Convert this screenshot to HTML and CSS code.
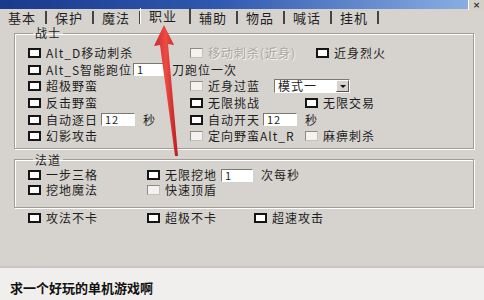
FILE: index.html
```html
<!DOCTYPE html>
<html lang="zh">
<head>
    <meta charset="UTF-8">
    <title>职业设置</title>
    <link rel="stylesheet" href="styles.css">
</head>
<body>
    <div class="window">
        <div class="titlebar"><span class="close">×</span></div>

        <div class="tabs">
            <span class="tab">基本</span>
            <span class="tab">保护</span>
            <span class="tab">魔法</span>
            <span class="tab active">职业</span>
            <span class="tab">辅助</span>
            <span class="tab">物品</span>
            <span class="tab">喊话</span>
            <span class="tab">挂机</span>
        </div>

        <fieldset class="group warrior">
            <legend>战士</legend>
            <div class="row">
                <span class="col1"><span class="cb"></span>Alt_D移动刺杀</span>
                <span class="col2 wide"><span class="cb off"></span><span class="off-text">移动刺杀(近身)</span></span>
                <span class="cb"></span>近身烈火
            </div>
            <div class="row">
                <span class="col1"><span class="cb"></span>Alt_S智能跑位<span class="field short">1</span><span class="after">刀跑位一次</span></span>
            </div>
            <div class="row">
                <span class="col1"><span class="cb"></span>超极野蛮</span>
                <span class="cb off"></span>近身过蓝
                <span class="select">模式一<span class="drop"></span></span>
            </div>
            <div class="row">
                <span class="col1"><span class="cb"></span>反击野蛮</span>
                <span class="col2"><span class="cb"></span>无限挑战</span>
                <span class="cb"></span>无限交易
            </div>
            <div class="row">
                <span class="col1"><span class="cb"></span>自动逐日<span class="field">12</span><span class="after">秒</span></span>
                <span class="cb"></span>自动开天<span class="field">12</span><span class="after">秒</span>
            </div>
            <div class="row">
                <span class="col1"><span class="cb"></span>幻影攻击</span>
                <span class="col2"><span class="cb off"></span>定向野蛮Alt_R</span>
                <span class="cb off"></span>麻痹刺杀
            </div>
        </fieldset>

        <fieldset class="group mage">
            <legend>法道</legend>
            <div class="row">
                <span class="col1 narrow"><span class="cb"></span>一步三格</span>
                <span class="cb"></span>无限挖地<span class="field wide-field">1</span><span class="after">次每秒</span>
            </div>
            <div class="row">
                <span class="col1 narrow"><span class="cb"></span>挖地魔法</span>
                <span class="cb off"></span>快速顶盾
            </div>
        </fieldset>

        <div class="row extra">
            <span class="col1 narrow"><span class="cb"></span>攻法不卡</span>
            <span class="col2 mid"><span class="cb"></span>超极不卡</span>
            <span class="cb"></span>超速攻击
        </div>
    </div>

    <div class="caption">求一个好玩的单机游戏啊</div>

    <!-- red marker arrow drawn over the screenshot -->
    <svg class="arrow" width="484" height="300" viewBox="0 0 484 300">
        <defs>
            <linearGradient id="red" x1="0" y1="0" x2="1" y2="0">
                <stop offset="0" stop-color="#c92a2a"/>
                <stop offset="0.5" stop-color="#ef4a44"/>
                <stop offset="1" stop-color="#b81e1e"/>
            </linearGradient>
        </defs>
        <polygon points="164,25 174,45 168,44 178,156 175,156 160,45 154,46" fill="url(#red)"/>
    </svg>
</body>
</html>
```

FILE: styles.css
```css
body {
    margin: 0;
    width: 484px;
    height: 300px;
    overflow: hidden;
    position: relative;
    background: #f1efed;
    font-family: "Noto Sans CJK SC", "Liberation Sans", sans-serif;
    color: #1e1e1e;
}
.window {
    height: 266px;
    background: #d6d3ce;
    border-bottom: 2px solid #cbc7c0;
}
.titlebar {
    height: 9px;
    display: flex;
    justify-content: flex-end;
    background: linear-gradient(to right, #1a3a8c, #2f58b0 45%, #8fb3e6);
}
.close {
    width: 15px;
    height: 10px;
    overflow: hidden;
    background: #d4d0c8;
    border-left: 1px solid #fff;
    font-family: "DejaVu Sans", sans-serif;
    font-size: 9px;
    line-height: 10px;
    text-align: center;
    font-weight: bold;
    color: #333;
}
.tabs {
    display: flex;
    align-items: center;
    height: 17px;
    font-size: 13px;
    letter-spacing: 1px;
}
.tab {
    width: 47px;
    box-sizing: border-box;
    padding-left: 8px;
    line-height: 13px;
    border-right: 2px solid #444;
}
.tab.active {
    width: 51px;
    margin-top: -3px;
    line-height: 16px;
    border-left: 1px solid #fff;
    margin-left: -1px;
}
.group {
    margin: 0 10px 0 14px;
    padding: 5px 0 3px 13px;
    border: 1px solid #a19d96;
    box-shadow: 1px 1px 0 #fff, inset 1px 1px 0 #fff;
    min-width: 0;
}
.group legend {
    margin-left: 5px;
    padding: 0 2px;
    font-size: 12px;
    line-height: 14px;
    letter-spacing: 1px;
}
.row {
    display: flex;
    align-items: center;
    height: 16.6px;
    font-size: 12px;
    line-height: 14px;
    letter-spacing: 1px;
    white-space: nowrap;
}
.col1 {
    width: 162px;
    flex: none;
    display: flex;
    align-items: center;
}
.col1.narrow {
    width: 119px;
}
.col2 {
    width: 115px;
    flex: none;
    display: flex;
    align-items: center;
}
.col2.wide {
    width: 126px;
}
.col2.mid {
    width: 107px;
}
.cb {
    width: 13px;
    height: 10px;
    box-sizing: border-box;
    flex: none;
    margin-right: 5px;
    border: 2px solid #151515;
    background: #fff;
}
.cb.off {
    border: 1px solid #c4c0ba;
    border-left-color: #8e8a84;
    border-top-color: #8e8a84;
    background: #f3f2f0;
}
.off-text {
    color: #aaa6a0;
    text-shadow: 1px 1px 0 #f4f3f1;
}
.field {
    width: 34px;
    height: 13px;
    flex: none;
    box-sizing: border-box;
    margin-left: 3px;
    padding-left: 3px;
    border: 1px solid;
    border-color: #7c7872 #fff #fff #7c7872;
    background: #fff;
    font-size: 11px;
    line-height: 11px;
}
.field.short {
    width: 31px;
    margin-left: 1px;
}
.field.wide-field {
    width: 32px;
    margin-left: 4px;
}
.after {
    flex: none;
    margin-left: 8px;
}
.select {
    width: 76px;
    height: 14px;
    flex: none;
    box-sizing: border-box;
    margin-left: 14px;
    padding-left: 3px;
    display: flex;
    align-items: center;
    justify-content: space-between;
    border: 1px solid;
    border-color: #7c7872 #fff #fff #7c7872;
    background: #fff;
    line-height: 12px;
}
.drop {
    width: 13px;
    height: 12px;
    box-sizing: border-box;
    background: #d6d3ce;
    border: 1px solid;
    border-color: #fff #555 #555 #fff;
    display: flex;
    align-items: center;
    justify-content: center;
}
.drop::after {
    content: "";
    border-left: 3px solid transparent;
    border-right: 3px solid transparent;
    border-top: 3px solid #111;
}
.mage {
    margin-top: 4px;
    padding: 1px 0 9px 13px;
}
.mage .row {
    height: 15px;
}
.extra {
    margin-top: 3px;
    padding-left: 28px;
    height: 15px;
}
.caption {
    padding: 11px 0 0 10px;
    font-size: 13px;
    line-height: 18px;
    font-weight: bold;
    color: #111;
}
.arrow {
    position: absolute;
    top: 0;
    left: 0;
    pointer-events: none;
}
```
